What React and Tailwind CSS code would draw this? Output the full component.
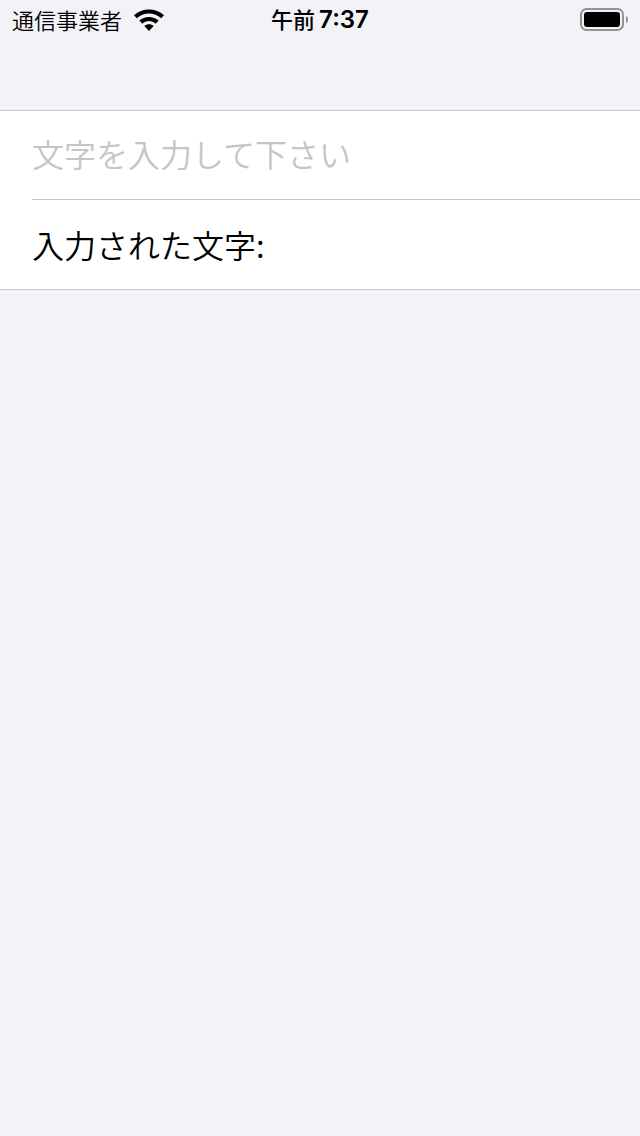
import { useState } from "react";

function WifiIcon() {
  return (
    <svg width="30" height="22" viewBox="0 0 30 22" aria-hidden="true">
      <path d="M15 0.500C9.300 0.500 4 2.500 0 6.300L2.900 9.300C6.200 6.200 10.400 4.600 15 4.600S23.800 6.200 27.100 9.300L30 6.300C26 2.500 20.700 0.500 15 0.500Z" />
      <path d="M15 7.900C11.300 7.900 8 9.200 5.300 11.600L8.400 14.700C10.200 13 12.500 12.100 15 12.100S19.800 13 21.600 14.700L24.700 11.600C22 9.200 18.700 7.900 15 7.900Z" />
      <path d="M15 15.300C13.200 15.300 11.600 15.900 10.300 17L15 22L19.700 17C18.400 15.900 16.800 15.300 15 15.300Z" />
    </svg>
  );
}

function BatteryIcon() {
  return (
    <svg width="48" height="24" viewBox="0 0 48 24" aria-hidden="true">
      <rect
        x="1"
        y="1"
        width="42"
        height="21"
        rx="5.500"
        fill="none"
        stroke="#939395"
        strokeWidth="2"
      />
      <rect x="4" y="4" width="36" height="15" rx="3" />
      <path d="M46 8C47.300 8.600 48 9.900 48 11.500S47.300 14.400 46 15Z" fill="#939395" />
    </svg>
  );
}

function StatusBar() {
  return (
    <header className="grid h-10 grid-cols-3 items-center pl-3 pr-3 text-[22px]">
      <div className="flex items-center gap-3">
        <span className="pb-0.5 font-[350]">通信事業者</span>
        <WifiIcon />
      </div>
      <div className="flex items-baseline justify-center gap-1 pb-0.5 font-medium">
        <span>午前</span>
        <span className="font-['Inter',sans-serif] text-2xl font-semibold">
          7:37
        </span>
      </div>
      <div className="flex justify-end">
        <BatteryIcon />
      </div>
    </header>
  );
}

function App() {
  const [text, setText] = useState("");

  return (
    <div className="min-h-screen bg-[#f2f2f7] font-['Noto_Sans_CJK_JP',sans-serif] text-black">
      <StatusBar />

      <main className="pt-[70px]">
        <div className="border-y border-[#c6c6c8] bg-white pl-8 text-[32px]">
          <div className="border-b border-[#c6c6c8]">
            <input
              type="text"
              aria-label="文字"
              value={text}
              onChange={(e) => setText(e.target.value)}
              placeholder="文字を入力して下さい"
              className="block h-[88px] w-full bg-transparent pb-1 font-[350] outline-none placeholder:text-[#c5c5c7]"
            />
          </div>
          <p className="flex h-[89px] items-center pb-0.5 font-[350]">
            入力された文字:{text}
          </p>
        </div>
      </main>
    </div>
  );
}

export default App;
